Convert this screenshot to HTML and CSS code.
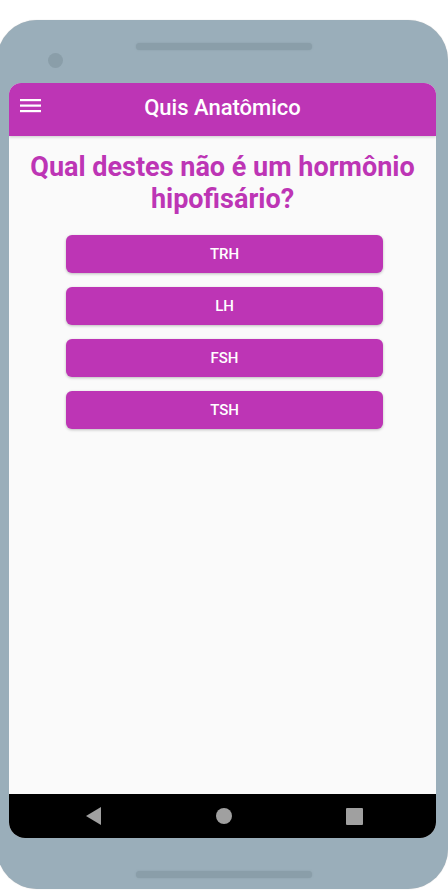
FILE: index.html
```html
<!DOCTYPE html>
<html lang="pt">
<head>
<meta charset="utf-8">
<title>Quis Anatômico</title>
<link rel="stylesheet" href="styles.css">
</head>
<body>
<div class="phone">
  <div class="phone-top">
    <span class="camera"></span>
    <span class="speaker"></span>
  </div>
  <div class="screen">
    <header class="appbar">
      <svg class="menu" width="22" height="16" viewBox="0 0 22 16"><rect x="0" y="1" width="21" height="2.2" fill="#fff"/><rect x="0" y="6.5" width="21" height="2.2" fill="#fff"/><rect x="0" y="12" width="21" height="2.2" fill="#fff"/></svg>
      <h1 class="title">Quis Anatômico</h1>
    </header>
    <main class="content">
      <h2 class="question">Qual destes não é um hormônio hipofisário?</h2>
      <div class="answers">
        <button class="answer">TRH</button>
        <button class="answer">LH</button>
        <button class="answer">FSH</button>
        <button class="answer">TSH</button>
      </div>
    </main>
    <nav class="navbar">
      <svg class="nav-icon" width="16" height="18" viewBox="0 0 16 18"><polygon points="15,0 15,18 0,9" fill="#a0a0a0"/></svg>
      <svg class="nav-icon" width="18" height="18" viewBox="0 0 18 18"><circle cx="9" cy="9" r="8" fill="#a0a0a0"/></svg>
      <svg class="nav-icon" width="17" height="17" viewBox="0 0 17 17"><rect x="0" y="0" width="17" height="17" rx="1" fill="#a0a0a0"/></svg>
    </nav>
  </div>
  <div class="phone-bottom">
    <span class="speaker"></span>
  </div>
</div>
</body>
</html>
```
FILE: styles.css
```css
* { box-sizing: border-box; }
html, body { margin: 0; padding: 0; background: #fff; }
body {
  width: 448px;
  height: 896px;
  overflow: hidden;
  font-family: Roboto, "Liberation Sans", sans-serif;
}
.phone {
  margin: 20px 0 0 -3px;
  width: 451px;
  height: 869px;
  background: #9aaeba;
  border-radius: 40px;
  padding: 0 12px 0 12px;
  display: flex;
  flex-direction: column;
  box-shadow: 0 0 1px rgba(0,0,0,0.25);
}
.phone-top {
  height: 63px;
  position: relative;
  display: flex;
  justify-content: center;
}
.speaker {
  display: block;
  width: 176px;
  height: 7px;
  border-radius: 4px;
  background: #8a9ea9;
  box-shadow: 0 0 2px #8a9ea9;
}
.phone-top .speaker { margin-top: 23px; margin-left: 2px; }
.camera {
  position: absolute;
  left: 39px;
  top: 33px;
  width: 15px;
  height: 15px;
  border-radius: 50%;
  background: #8a9ea9;
}
.screen {
  height: 755px;
  display: flex;
  flex-direction: column;
  background: #fafafa;
  border-radius: 12px 12px 16px 16px;
  overflow: hidden;
}
.appbar {
  height: 53px;
  flex: none;
  background: #bd35b5;
  display: flex;
  align-items: center;
  justify-content: center;
  position: relative;
  box-shadow: 0 1px 3px rgba(0,0,0,0.2);
  z-index: 1;
  padding-bottom: 5px;
}
.menu { position: absolute; left: 11px; top: 15px; }
.title {
  margin: 0;
  color: #fff;
  font-size: 22px;
  font-weight: 500;
  letter-spacing: 0;
}
.content {
  flex: 1;
  display: flex;
  flex-direction: column;
  align-items: center;
  padding-top: 15px;
}
.question {
  margin: 0;
  color: #bd35b5;
  font-size: 27px;
  line-height: 32px;
  font-weight: 700;
  text-align: center;
  width: 424px;
}
.answers {
  margin-top: 20px;
  display: flex;
  flex-direction: column;
  gap: 14px;
  width: 317px;
  margin-left: 4px;
}
.answer {
  height: 38px;
  border: 0;
  border-radius: 6px;
  background: #bd35b5;
  color: #fff;
  font-family: Roboto, "Liberation Sans", sans-serif;
  font-size: 15px;
  font-weight: 500;
  box-shadow: 0 1px 3px rgba(0,0,0,0.25);
}
.navbar {
  height: 44px;
  flex: none;
  background: #000;
  display: flex;
  align-items: center;
  justify-content: space-between;
  padding: 0 73px 0 77px;
}
.phone-bottom {
  flex: 1;
  display: flex;
  justify-content: center;
}
.phone-bottom .speaker { margin-top: 33px; margin-left: 2px; }
```
